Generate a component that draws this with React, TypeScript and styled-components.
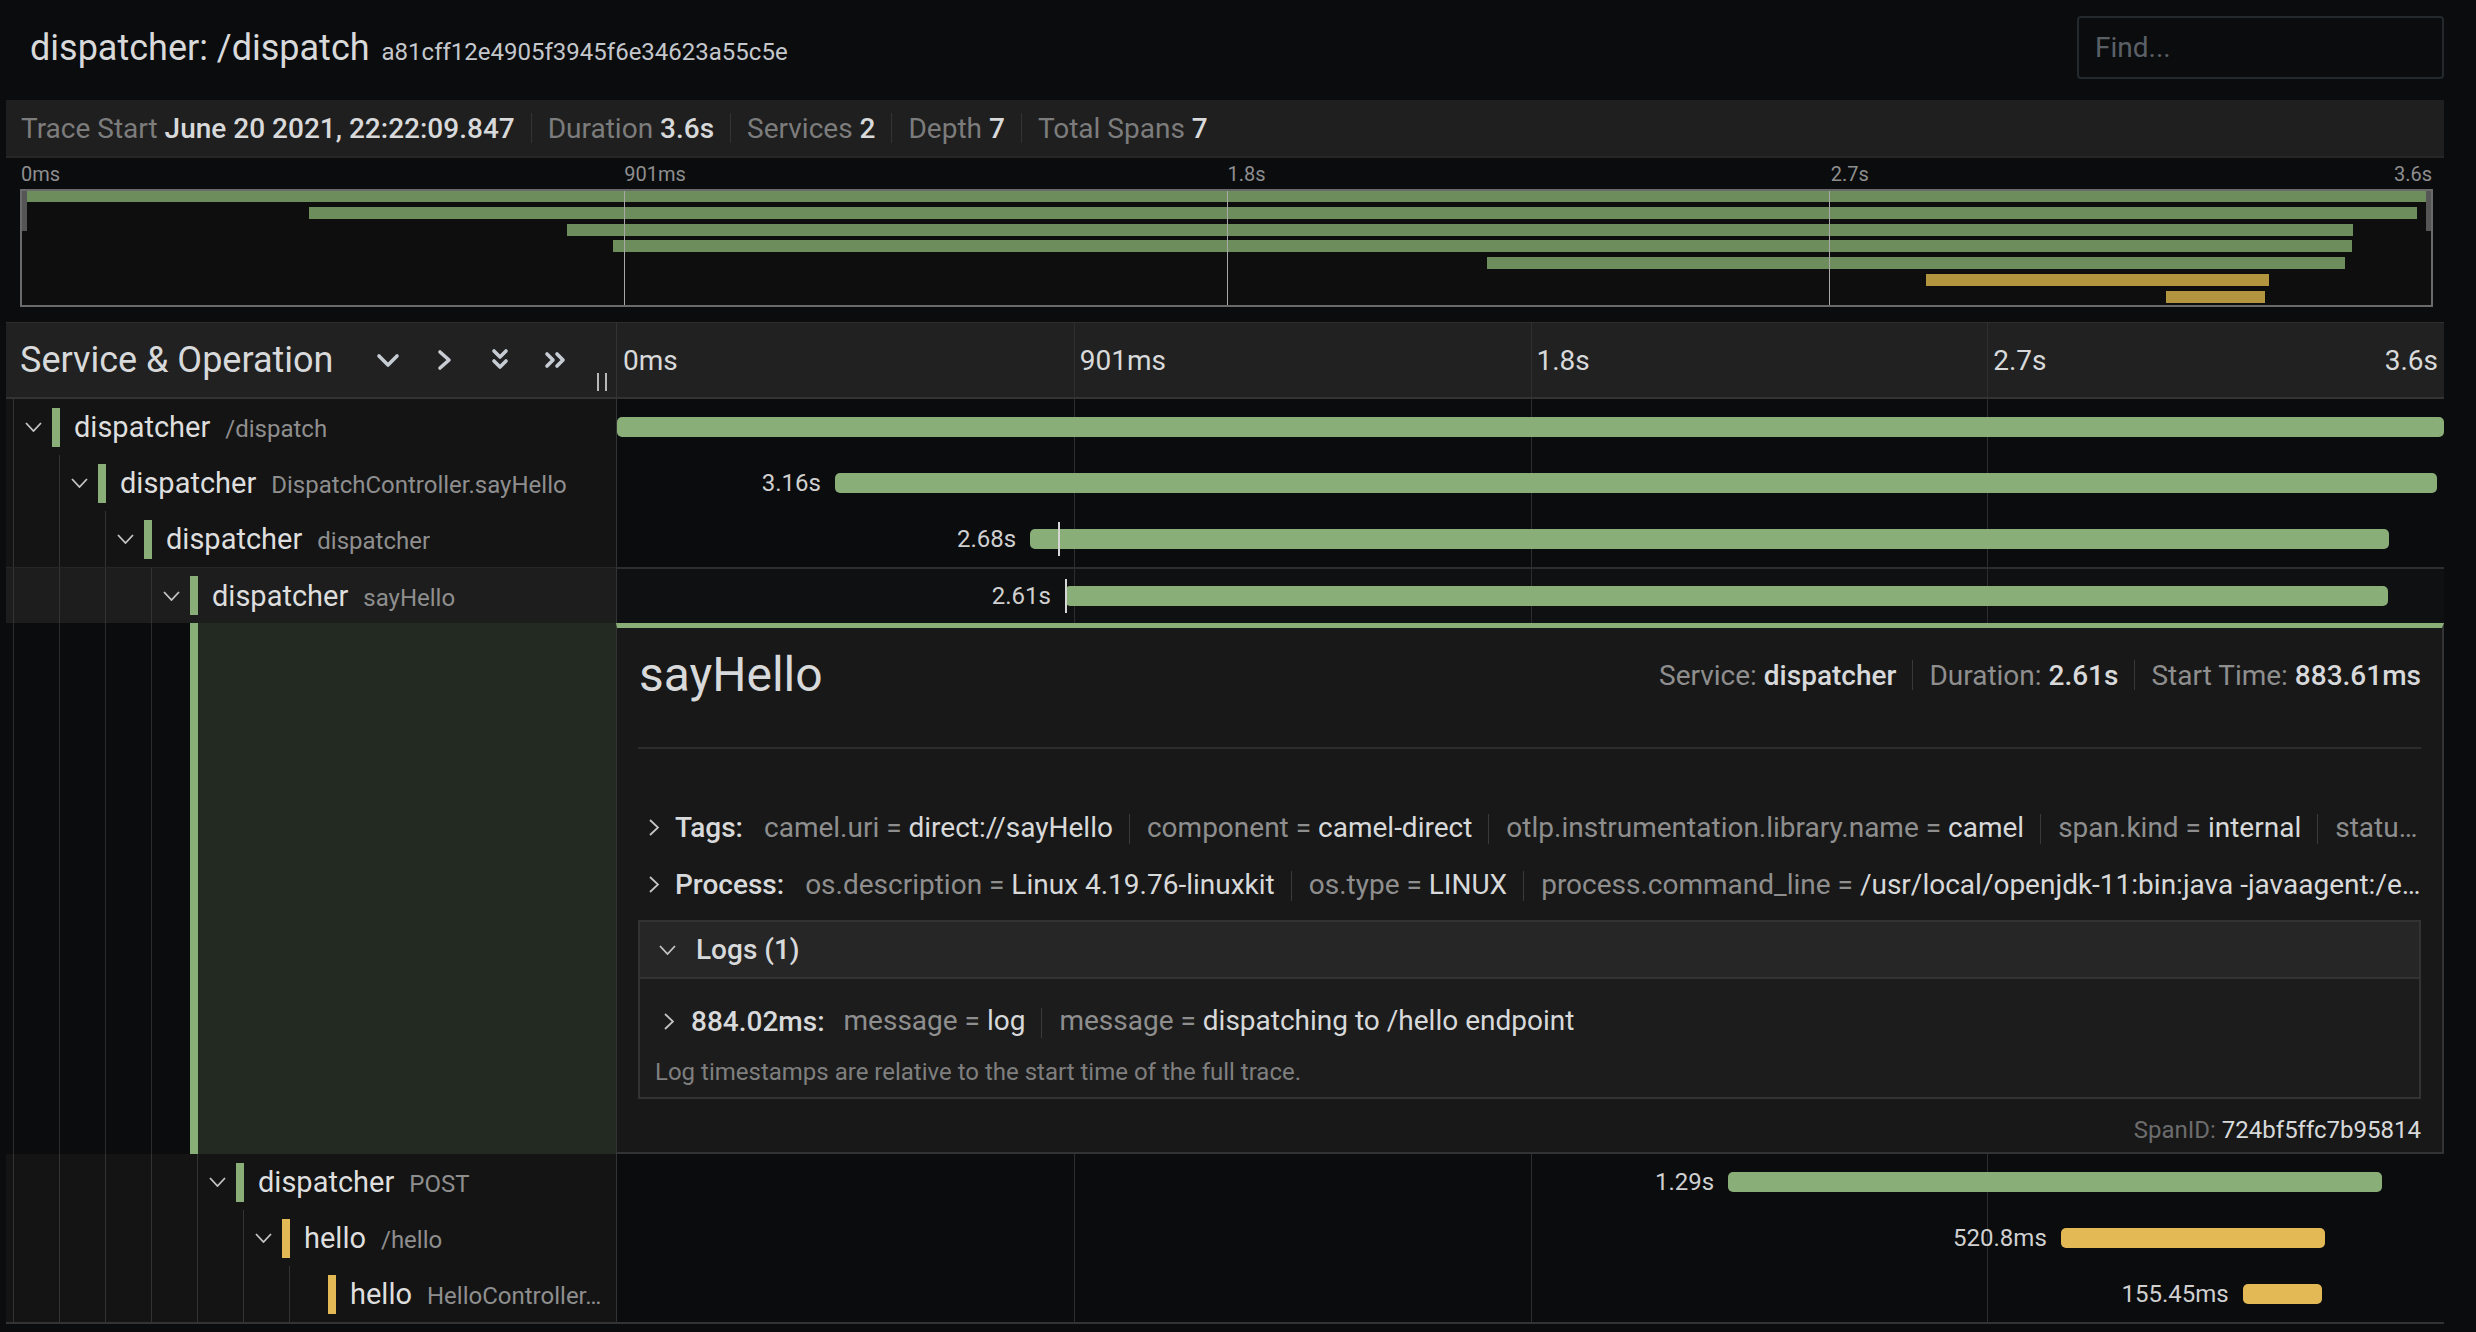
import React from 'react';
import styled, { createGlobalStyle } from 'styled-components';

const TOTAL = 3604;
const GREEN = '#89ae78';
const YELLOW = '#e3b955';
const MINI_GREEN = '#6d8e5c';
const MINI_YELLOW = '#b4953f';

type Span = {
  id: string;
  level: number;
  service: string;
  operation: string;
  color: 'green' | 'yellow';
  start: number;
  duration: number;
  label?: string;
  marker?: number;
  hasChildren: boolean;
  selected?: boolean;
};

const spans: Span[] = [
  { id: 's1', level: 0, service: 'dispatcher', operation: '/dispatch', color: 'green', start: 0, duration: 3604, hasChildren: true },
  { id: 's2', level: 1, service: 'dispatcher', operation: 'DispatchController.sayHello', color: 'green', start: 430, duration: 3160, label: '3.16s', hasChildren: true },
  { id: 's3', level: 2, service: 'dispatcher', operation: 'dispatcher', color: 'green', start: 815, duration: 2680, label: '2.68s', marker: 870, hasChildren: true },
  { id: 's4', level: 3, service: 'dispatcher', operation: 'sayHello', color: 'green', start: 883.61, duration: 2610, label: '2.61s', marker: 884.02, hasChildren: true, selected: true },
  { id: 's5', level: 4, service: 'dispatcher', operation: 'POST', color: 'green', start: 2192, duration: 1290, label: '1.29s', hasChildren: true },
  { id: 's6', level: 5, service: 'hello', operation: '/hello', color: 'yellow', start: 2848, duration: 520.8, label: '520.8ms', hasChildren: true },
  { id: 's7', level: 6, service: 'hello', operation: 'HelloController…', color: 'yellow', start: 3207, duration: 155.45, label: '155.45ms', hasChildren: false },
];

const ticks = ['0ms', '901ms', '1.8s', '2.7s', '3.6s'];

const pct = (ms: number) => (ms / TOTAL) * 100;

const GlobalStyle = createGlobalStyle`
  html, body {
    margin: 0;
    padding: 0;
    background: #0b0c0e;
  }
  * {
    box-sizing: border-box;
  }
`;

const Page = styled.div`
  width: 2476px;
  height: 1332px;
  overflow: hidden;
  padding: 0 32px 0 6px;
  background: #0b0c0e;
  color: #d8d9da;
  font-family: Roboto, "Liberation Sans", sans-serif;
`;

/* ---------- top bar ---------- */

const TopBar = styled.header`
  display: flex;
  align-items: center;
  justify-content: space-between;
  padding: 16px 0 21px 24px;
`;

const TitleGroup = styled.div`
  display: flex;
  align-items: baseline;
  gap: 12px;
`;

const TraceTitle = styled.h1`
  margin: 0;
  font-size: 36px;
  line-height: 42px;
  font-weight: 400;
  color: #d8d9da;
`;

const TraceId = styled.span`
  font-size: 24px;
  color: #c4c7cb;
`;

const FindInput = styled.input`
  width: 367px;
  height: 63px;
  padding: 0 16px;
  border: 2px solid #23292c;
  border-radius: 4px;
  background: #0b0c0e;
  color: #d8d9da;
  font-family: Roboto, "Liberation Sans", sans-serif;
  font-size: 28px;
  outline: none;

  &::placeholder {
    color: #5a6066;
  }
`;

/* ---------- summary ---------- */

const Summary = styled.div`
  display: flex;
  align-items: center;
  height: 58px;
  padding-left: 15px;
  background: #1f1f1f;
  border-bottom: 2px solid #262626;
  font-size: 28px;
`;

const SummaryItem = styled.span`
  color: #7c7c7c;
  white-space: nowrap;

  b {
    color: #d8d9da;
    font-weight: 500;
  }
`;

const SummarySep = styled.span`
  width: 1px;
  height: 30px;
  margin: 0 16px;
  background: #333333;
`;

/* ---------- minimap ---------- */

const Minimap = styled.section`
  margin: 0 11px 15px 14px;
`;

const MinimapLabels = styled.div`
  position: relative;
  height: 31px;
  font-size: 20px;
  line-height: 24px;
  color: #8e8e8e;
`;

const MinimapLabel = styled.span`
  position: absolute;
  top: 4px;
`;

const MinimapBox = styled.div`
  position: relative;
  height: 118px;
  border: 2px solid #6a6a6a;
  background: #0e0e0f;
  overflow: hidden;
`;

const MinimapLine = styled.span`
  position: absolute;
  top: 0;
  bottom: 0;
  width: 1px;
  background: #a8a8a8;
`;

const MinimapBar = styled.span<{ $color: string }>`
  position: absolute;
  height: 12px;
  background: ${p => p.$color};
`;

const MinimapHandle = styled.span<{ $side: 'left' | 'right' }>`
  position: absolute;
  top: 0;
  ${p => p.$side}: 0;
  width: 5px;
  height: 40px;
  background: #555555;
`;

/* ---------- trace table ---------- */

const TraceTable = styled.section`
  border-top: 1px solid #2e2e2e;
  border-bottom: 2px solid #333333;
`;

const TableRow = styled.div<{ $height: number }>`
  display: grid;
  grid-template-columns: 610px 1fr;
  height: ${p => p.$height}px;
`;

const HeaderLeft = styled.div`
  position: relative;
  display: flex;
  align-items: center;
  padding-left: 14px;
  background: #212121;
  border-bottom: 2px solid #333333;
`;

const HeaderTitle = styled.div`
  flex: 0 0 353px;
  font-size: 36px;
  color: #d8d9da;
`;

const HeaderIcons = styled.div`
  display: flex;
  gap: 26px;
`;

const IconButton = styled.span`
  display: flex;
  align-items: center;
  justify-content: center;
  width: 30px;
  height: 30px;
  color: #c7ccd4;
`;

const Resizer = styled.span`
  position: absolute;
  right: 9px;
  bottom: 6px;
  width: 10px;
  height: 18px;
  border-left: 2px solid #b8b8b8;
  border-right: 2px solid #b8b8b8;
`;

const HeaderRight = styled.div`
  position: relative;
  background: #212121;
  border-left: 1px solid #333333;
  border-bottom: 2px solid #333333;
`;

const TickLabel = styled.span`
  position: absolute;
  top: 0;
  bottom: 0;
  display: flex;
  align-items: center;
  font-size: 28px;
  color: #d8d9da;
`;

const GridLine = styled.span`
  position: absolute;
  top: 0;
  bottom: 0;
  width: 1px;
  background: #2e2e2e;
`;

/* span rows */

const TreeCell = styled.div<{ $selected?: boolean }>`
  display: flex;
  align-items: stretch;
  padding: 0 10px 0 7px;
  background: ${p => (p.$selected ? '#1d1d1d' : '#141414')};
  border-top: ${p => (p.$selected ? '1px solid #262626' : 'none')};
  overflow: hidden;
`;

const Guide = styled.span`
  flex: 0 0 46px;
  border-left: 1px solid #333333;
`;

const ToggleSlot = styled.span`
  flex: 0 0 39px;
  display: flex;
  align-items: center;
  justify-content: center;
  border-left: 1px solid #333333;
  color: #c4c4c4;
`;

const ColorBar = styled.span<{ $color: string }>`
  flex: 0 0 8px;
  height: 39px;
  align-self: center;
  background: ${p => p.$color};
`;

const SpanLabel = styled.div`
  display: flex;
  align-items: baseline;
  align-self: center;
  min-width: 0;
  margin-left: 14px;
  white-space: nowrap;
`;

const ServiceName = styled.span`
  flex-shrink: 0;
  font-size: 29px;
  color: #dedede;
`;

const OperationName = styled.span`
  min-width: 0;
  margin-left: 15px;
  overflow: hidden;
  text-overflow: ellipsis;
  font-size: 24px;
  color: #8e8e8e;
`;

const TimelineCell = styled.div<{ $selected?: boolean }>`
  position: relative;
  background: ${p => (p.$selected ? '#0f1011' : '#0b0c0e')};
  border-left: 1px solid #333333;
  border-top: ${p => (p.$selected ? '2px solid #2e2e2e' : 'none')};
`;

const SpanBar = styled.span<{ $color: string }>`
  position: absolute;
  top: calc(50% - 10px);
  height: 20px;
  border-radius: 5px;
  background: ${p => p.$color};
`;

const BarLabel = styled.span`
  position: absolute;
  top: 0;
  bottom: 0;
  display: flex;
  align-items: center;
  font-size: 24px;
  color: #d0d0d0;
`;

const LogMarker = styled.span`
  position: absolute;
  top: calc(50% - 17px);
  width: 2px;
  height: 34px;
  background: #d6d6d6;
`;

/* detail row */

const DetailTree = styled.div`
  display: flex;
  align-items: stretch;
  padding-left: 7px;
  background: #0b0c0e;
`;

const DetailGuide = styled.span<{ $width: number }>`
  flex: 0 0 ${p => p.$width}px;
  border-left: 1px solid #2c2c2c;
`;

const DetailStripe = styled.span`
  flex: 0 0 8px;
  background: ${GREEN};
`;

const DetailFill = styled.span`
  flex: 1;
  background: #222a21;
`;

const DetailPanel = styled.div`
  display: flex;
  flex-direction: column;
  padding: 0 21px;
  background: #181818;
  border-top: 5px solid ${GREEN};
  border-left: 1px solid #333333;
  border-right: 2px solid #333333;
  border-bottom: 2px solid #333333;
  overflow: hidden;
`;

const DetailHeader = styled.div`
  display: flex;
  align-items: center;
  justify-content: space-between;
  padding: 18px 0 43px 1px;
  border-bottom: 2px solid #2c2c2c;
`;

const DetailTitle = styled.h2`
  margin: 0;
  font-size: 48px;
  line-height: 58px;
  font-weight: 400;
  color: #d8d9da;
`;

const DetailMeta = styled.div`
  display: flex;
  align-items: center;
  font-size: 28px;
  color: #8e8e8e;
  white-space: nowrap;

  b {
    color: #d8d9da;
    font-weight: 500;
  }
`;

const MetaSep = styled.span`
  width: 1px;
  height: 30px;
  margin: 0 16px;
  background: #383838;
`;

const KVSection = styled.div`
  margin-top: 50px;
`;

const KVRow = styled.div`
  display: flex;
  align-items: center;
  height: 57px;
  font-size: 28px;
`;

const RowChevron = styled.span<{ $indent?: number }>`
  display: flex;
  align-items: center;
  margin-left: ${p => p.$indent ?? 0}px;
  color: #c4c4c4;
`;

const KVLabel = styled.span`
  flex-shrink: 0;
  margin-left: 16px;
  font-weight: 500;
  color: #d8d9da;
`;

const KVList = styled.div<{ $gap?: number }>`
  flex: 1;
  min-width: 0;
  margin-left: ${p => p.$gap ?? 21}px;
  overflow: hidden;
  white-space: nowrap;
  text-overflow: ellipsis;
  color: #8e8e8e;
`;

const KVValue = styled.span`
  color: #d8d9da;
`;

const KVSep = styled.span`
  display: inline-block;
  width: 1px;
  height: 30px;
  margin: 0 17px 0 16px;
  vertical-align: middle;
  background: #3a3a3a;
`;

const LogsBox = styled.div`
  margin-top: 7px;
  border: 2px solid #333333;
`;

const LogsHeader = styled.div`
  display: flex;
  align-items: center;
  gap: 20px;
  height: 57px;
  padding-left: 19px;
  background: #262626;
  border-bottom: 2px solid #333333;
  font-size: 28px;
  font-weight: 500;
  color: #d8d9da;
`;

const LogsBody = styled.div`
  padding: 14px 0 9px 15px;
  background: #1c1c1c;
`;

const LogRow = styled.div`
  display: flex;
  align-items: center;
  height: 56px;
  padding-left: 9px;
  font-size: 28px;
`;

const LogTime = styled.span`
  flex-shrink: 0;
  margin-left: 17px;
  font-weight: 500;
  color: #d8d9da;
`;

const LogNote = styled.div`
  margin-top: 7px;
  font-size: 24px;
  line-height: 32px;
  color: #7f7f7f;
`;

const SpanIdLine = styled.div`
  margin-top: 15px;
  font-size: 24px;
  line-height: 32px;
  text-align: right;
  color: #6c6c6c;

  span {
    color: #d8d9da;
  }
`;

/* ---------- icons ---------- */

const ThinDown = () => (
  <svg width="17" height="10" viewBox="0 0 17 10" fill="none">
    <path d="M1 1L8.5 9L16 1" stroke="currentColor" strokeWidth="1.8" />
  </svg>
);

const ThinRight = () => (
  <svg width="10" height="17" viewBox="0 0 10 17" fill="none">
    <path d="M1 1L9 8.5L1 16" stroke="currentColor" strokeWidth="1.8" />
  </svg>
);

const BoldIcon: React.FC<{ d: string; w: number; h: number }> = ({ d, w, h }) => (
  <svg width={w} height={h} viewBox={`0 0 ${w} ${h}`} fill="none">
    <path d={d} stroke="currentColor" strokeWidth="3.6" strokeLinecap="round" strokeLinejoin="round" />
  </svg>
);

/* ---------- parts ---------- */

// pairs with an empty value are shown as a bare (cut) key, as the panel does when out of room
const kv = (pairs: [string, string][]) =>
  pairs.map(([k, v], i) => (
    <React.Fragment key={k + i}>
      {i > 0 && <KVSep />}
      {v ? (
        <>
          {k} = <KVValue>{v}</KVValue>
        </>
      ) : (
        k
      )}
    </React.Fragment>
  ));

const TimelineGrid = () => (
  <>
    {[25, 50, 75].map(p => (
      <GridLine key={p} style={{ left: `${p}%` }} />
    ))}
  </>
);

const SpanRow: React.FC<{ span: Span }> = ({ span }) => {
  const color = span.color === 'green' ? GREEN : YELLOW;
  const left = pct(span.start);
  const width = pct(span.duration);
  return (
    <TableRow $height={56}>
      <TreeCell $selected={span.selected}>
        {Array.from({ length: span.level }).map((_, i) => (
          <Guide key={i} />
        ))}
        <ToggleSlot>{span.hasChildren && <ThinDown />}</ToggleSlot>
        <ColorBar $color={color} />
        <SpanLabel>
          <ServiceName>{span.service}</ServiceName>
          <OperationName>{span.operation}</OperationName>
        </SpanLabel>
      </TreeCell>
      <TimelineCell $selected={span.selected}>
        <TimelineGrid />
        {span.label && (
          <BarLabel style={{ right: `calc(${100 - left}% + 14px)` }}>{span.label}</BarLabel>
        )}
        <SpanBar $color={color} style={{ left: `${left}%`, width: `${Math.min(width, 100 - left)}%` }} />
        {span.marker !== undefined && <LogMarker style={{ left: `${pct(span.marker)}%` }} />}
      </TimelineCell>
    </TableRow>
  );
};

const DetailRow = () => (
  <TableRow $height={531}>
    <DetailTree>
      <DetailGuide $width={46} />
      <DetailGuide $width={46} />
      <DetailGuide $width={46} />
      <DetailGuide $width={39} />
      <DetailStripe />
      <DetailFill />
    </DetailTree>
    <DetailPanel>
      <DetailHeader>
        <DetailTitle>sayHello</DetailTitle>
        <DetailMeta>
          Service:&nbsp;<b>dispatcher</b>
          <MetaSep />
          Duration:&nbsp;<b>2.61s</b>
          <MetaSep />
          Start Time:&nbsp;<b>883.61ms</b>
        </DetailMeta>
      </DetailHeader>

      <KVSection>
        <KVRow>
          <RowChevron $indent={11}>
            <ThinRight />
          </RowChevron>
          <KVLabel>Tags:</KVLabel>
          <KVList>
            {kv([
              ['camel.uri', 'direct://sayHello'],
              ['component', 'camel-direct'],
              ['otlp.instrumentation.library.name', 'camel'],
              ['span.kind', 'internal'],
              ['statu…', ''],
            ])}
          </KVList>
        </KVRow>
        <KVRow>
          <RowChevron $indent={11}>
            <ThinRight />
          </RowChevron>
          <KVLabel>Process:</KVLabel>
          <KVList>
            {kv([
              ['os.description', 'Linux 4.19.76-linuxkit'],
              ['os.type', 'LINUX'],
              ['process.command_line', '/usr/local/openjdk-11:bin:java -javaagent:/e…'],
            ])}
          </KVList>
        </KVRow>
      </KVSection>

      <LogsBox>
        <LogsHeader>
          <RowChevron>
            <ThinDown />
          </RowChevron>
          Logs (1)
        </LogsHeader>
        <LogsBody>
          <LogRow>
            <RowChevron>
              <ThinRight />
            </RowChevron>
            <LogTime>884.02ms:</LogTime>
            <KVList $gap={19}>
              {kv([
                ['message', 'log'],
                ['message', 'dispatching to /hello endpoint'],
              ])}
            </KVList>
          </LogRow>
          <LogNote>Log timestamps are relative to the start time of the full trace.</LogNote>
        </LogsBody>
      </LogsBox>

      <SpanIdLine>
        SpanID: <span>724bf5ffc7b95814</span>
      </SpanIdLine>
    </DetailPanel>
  </TableRow>
);

const App: React.FC = () => {
  const selectedIndex = spans.findIndex(s => s.selected);
  return (
    <Page>
      <GlobalStyle />
      <TopBar>
        <TitleGroup>
          <TraceTitle>dispatcher: /dispatch</TraceTitle>
          <TraceId>a81cff12e4905f3945f6e34623a55c5e</TraceId>
        </TitleGroup>
        <FindInput placeholder="Find..." />
      </TopBar>

      <Summary>
        <SummaryItem>
          Trace Start <b>June 20 2021, 22:22:09.847</b>
        </SummaryItem>
        <SummarySep />
        <SummaryItem>
          Duration <b>3.6s</b>
        </SummaryItem>
        <SummarySep />
        <SummaryItem>
          Services <b>2</b>
        </SummaryItem>
        <SummarySep />
        <SummaryItem>
          Depth <b>7</b>
        </SummaryItem>
        <SummarySep />
        <SummaryItem>
          Total Spans <b>7</b>
        </SummaryItem>
      </Summary>

      <Minimap>
        <MinimapLabels>
          {ticks.map((t, i) =>
            i === ticks.length - 1 ? (
              <MinimapLabel key={t} style={{ right: 1 }}>
                {t}
              </MinimapLabel>
            ) : (
              <MinimapLabel key={t} style={{ left: `calc(${i * 25}% + 1px)` }}>
                {t}
              </MinimapLabel>
            )
          )}
        </MinimapLabels>
        <MinimapBox>
          {spans.map((s, i) => (
            <MinimapBar
              key={s.id}
              $color={s.color === 'green' ? MINI_GREEN : MINI_YELLOW}
              style={{
                top: -1 + i * 16.8,
                left: `${pct(s.start)}%`,
                width: `${Math.min(pct(s.duration), 100 - pct(s.start)) - 0.2}%`,
              }}
            />
          ))}
          {[25, 50, 75].map(p => (
            <MinimapLine key={p} style={{ left: `${p}%` }} />
          ))}
          <MinimapHandle $side="left" />
          <MinimapHandle $side="right" />
        </MinimapBox>
      </Minimap>

      <TraceTable>
        <TableRow $height={76}>
          <HeaderLeft>
            <HeaderTitle>Service &amp; Operation</HeaderTitle>
            <HeaderIcons>
              <IconButton>
                <BoldIcon w={24} h={15} d="M3 3L12 12L21 3" />
              </IconButton>
              <IconButton>
                <BoldIcon w={15} h={22} d="M3 3L12 11L3 19" />
              </IconButton>
              <IconButton>
                <BoldIcon w={18} h={24} d="M3 3L9 9L15 3M3 13L9 19L15 13" />
              </IconButton>
              <IconButton>
                <BoldIcon w={24} h={18} d="M3 3L9 9L3 15M13 3L19 9L13 15" />
              </IconButton>
            </HeaderIcons>
            <Resizer />
          </HeaderLeft>
          <HeaderRight>
            <TimelineGrid />
            {ticks.map((t, i) =>
              i === ticks.length - 1 ? (
                <TickLabel key={t} style={{ right: 6 }}>
                  {t}
                </TickLabel>
              ) : (
                <TickLabel key={t} style={{ left: `calc(${i * 25}% + 6px)` }}>
                  {t}
                </TickLabel>
              )
            )}
          </HeaderRight>
        </TableRow>

        {spans.map((s, i) => (
          <React.Fragment key={s.id}>
            <SpanRow span={s} />
            {i === selectedIndex && <DetailRow />}
          </React.Fragment>
        ))}
      </TraceTable>
    </Page>
  );
};

export default App;
